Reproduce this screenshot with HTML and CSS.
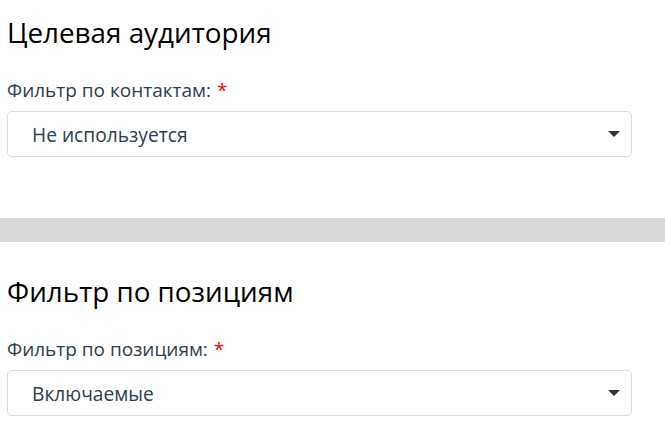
FILE: index.html
```html
<!DOCTYPE html>
<html lang="ru">
<head>
<meta charset="utf-8">
<link rel="stylesheet" href="styles.css">
</head>
<body>
<section class="section section-first">
  <h2 class="section-title">Целевая аудитория</h2>
  <div class="field">
    <label class="field-label">Фильтр по контактам: <span class="required">*</span></label>
    <div class="select">
      <span class="select-value">Не используется</span>
      <span class="select-arrow"></span>
    </div>
  </div>
</section>
<div class="divider"></div>
<section class="section">
  <h2 class="section-title">Фильтр по позициям</h2>
  <div class="field">
    <label class="field-label">Фильтр по позициям: <span class="required">*</span></label>
    <div class="select">
      <span class="select-value">Включаемые</span>
      <span class="select-arrow"></span>
    </div>
  </div>
</section>
</body>
</html>
```
FILE: styles.css
```css
html, body {
  margin: 0;
  padding: 0;
  background: #fff;
  font-family: "Open Sans", "Noto Sans", sans-serif;
}
.section {
  padding: 32px 33px 0 7px;
}
.section-first {
  padding-top: 15px;
  padding-bottom: 61px;
}
.section-title {
  margin: 0;
  font-size: 27.8px;
  line-height: 34px;
  font-weight: 400;
  color: #000;
}
.field {
  margin-top: 29px;
  display: flex;
  flex-direction: column;
  gap: 9px;
}
.field-label {
  font-size: 19px;
  line-height: 24px;
  color: #2c3e50;
}
.required {
  color: #ff0000;
  margin-left: 1px;
}
.select {
  height: 46px;
  box-sizing: border-box;
  border: 1px solid #dcdcdc;
  border-radius: 5px;
  display: flex;
  align-items: center;
  justify-content: space-between;
  padding: 0 11px 0 24px;
}
.select-value {
  font-size: 19.2px;
  color: #2c3e50;
}
.select-arrow {
  width: 0;
  height: 0;
  border-left: 6px solid transparent;
  border-right: 6px solid transparent;
  border-top: 6px solid #333;
}
.divider {
  height: 24px;
  background: #d9d9d9;
}
```
